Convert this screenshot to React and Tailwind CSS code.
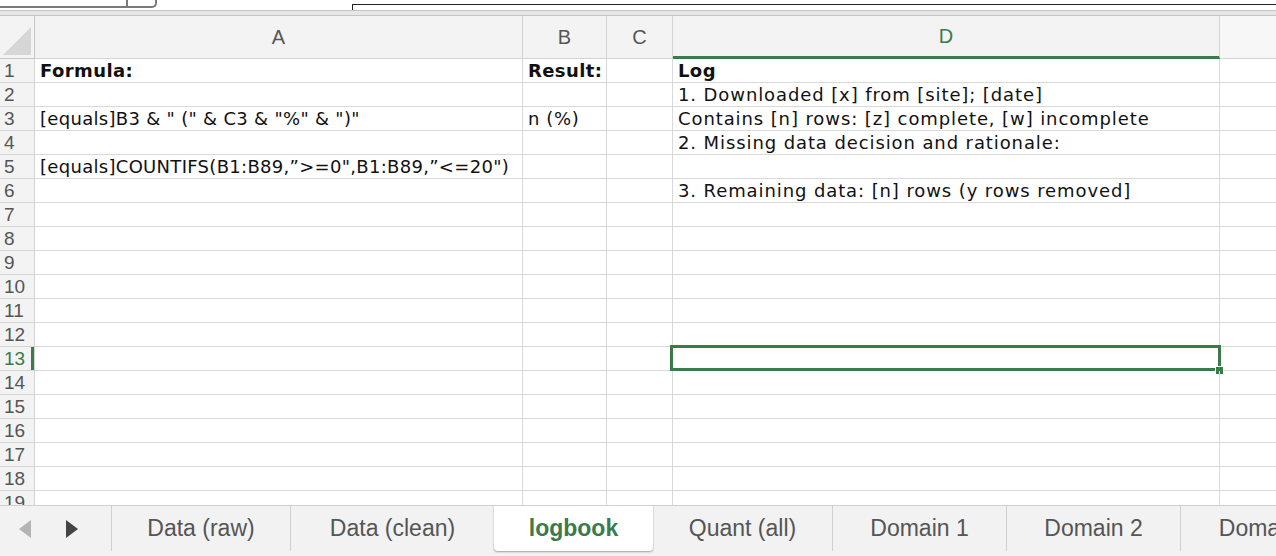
import React from "react";

const cellFont = { fontFamily: '"DejaVu Sans", "Noto Sans", sans-serif' };

const rows = [
  { a: "Formula:", b: "Result:", d: "Log", bold: true },
  { d: "1. Downloaded [x] from [site]; [date]" },
  { a: '[equals]B3 & " (" & C3 & "%" & ")"', b: "n (%)", d: "Contains [n] rows: [z] complete, [w] incomplete" },
  { d: "2. Missing data decision and rationale:" },
  { a: "[equals]COUNTIFS(B1:B89,”>=0\",B1:B89,”<=20\")" },
  { d: "3. Remaining data: [n] rows (y rows removed]" },
  {}, {}, {}, {}, {}, {}, {}, {}, {}, {}, {}, {}, {},
];

const tabs = ["Data (raw)", "Data (clean)", "logbook", "Quant (all)", "Domain 1", "Domain 2", "Domain 3"];
const tabWidths = ["w-[179px]", "w-[203px]", "w-[159px]", "w-[180px]", "w-[174px]", "w-[174px]", "w-[174px]"];

const colW = "grid grid-cols-[35px_488px_84px_66px_547px_1fr]";
const cellCls = "border-r border-b border-[#d9d9d9] pl-[5px] pt-[1px] text-[18px] leading-[22px] text-[#111] whitespace-nowrap overflow-visible ";

function Row({ n, r }) {
  const sel = n === 13;
  const txt = r.bold ? "font-bold tracking-[0.4px]" : "";
  return (
    <div className={colW + " h-[24px] shrink-0"}>
      <div
        className={
          "border-r border-b border-[#d4d4d4] bg-[#f3f3f3] pl-[4px] text-[19px] leading-[23px] " +
          (sel ? "text-[#3b7a4b] shadow-[inset_-3px_0_0_#3b7a4b]" : "text-[#555]")
        }
        style={{ fontFamily: '"Liberation Sans", Arial, sans-serif' }}
      >
        {n}
      </div>
      <div className={cellCls + (r.bold ? txt : "tracking-[0.3px]")} style={cellFont}>
        {r.a}
      </div>
      <div className={cellCls + (r.bold ? txt : "tracking-[0.6px]")} style={cellFont}>
        {r.b}
      </div>
      <div className="border-r border-b border-[#d9d9d9]" />
      <div className={"relative " + cellCls + (r.bold ? txt : "tracking-[0.9px]")} style={cellFont}>
        {r.d}
        {sel && (
          <>
            <div className="absolute -left-[3px] -top-[2px] -right-[2px] -bottom-[1px] border-[3px] border-[#3b7a4b]" />
            <div className="absolute -right-[5px] -bottom-[5px] h-[9px] w-[9px] bg-[#3b7a4b] border border-white" />
          </>
        )}
      </div>
      <div className="border-b border-[#d9d9d9]" />
    </div>
  );
}

export default function App() {
  return (
    <div className="flex h-[556px] w-[1276px] flex-col overflow-hidden bg-white">
      {/* toolbar remnant */}
      <div className="flex h-[10px] shrink-0 items-start bg-white">
        <div className="flex h-[8px] w-[157px] shrink-0 rounded-br-[5px] border-r-2 border-b-2 border-[#7a7a7a]">
          <div className="w-[128px] border-r-2 border-[#7a7a7a]" />
        </div>
        <div className="ml-[195px] mt-[4px] h-[6px] flex-1 border-t-[1.5px] border-l border-[#222]" />
      </div>
      <div className="h-[6px] shrink-0 border-t border-b border-[#c4c4c4] bg-[#e6e6e6]" />

      {/* column headers */}
      <div className={colW + " h-[43px] shrink-0 bg-[#f3f3f3]"} style={{ fontFamily: '"Liberation Sans", Arial, sans-serif' }}>
        <div className="relative border-r border-b border-[#c8c8c8]">
          <svg className="absolute right-[3px] bottom-[3px]" width="28" height="28" viewBox="0 0 28 28">
            <polygon points="28,0 28,28 0,28" fill="#d6d6d6" />
          </svg>
        </div>
        {["A", "B", "C"].map((c) => (
          <div key={c} className="flex items-center justify-center border-r border-b border-[#d4d4d4] text-[20px] text-[#555]">
            {c}
          </div>
        ))}
        <div className="flex items-center justify-center border-r border-[#d4d4d4] border-b-[3px] border-b-[#3b7a4b] text-[20px] text-[#3b7a4b]">
          D
        </div>
        <div className="border-b border-[#d4d4d4] bg-[#f7f7f7]" />
      </div>

      {/* grid */}
      <div className="flex flex-1 flex-col overflow-hidden">
        {rows.map((r, i) => (
          <Row key={i} n={i + 1} r={r} />
        ))}
      </div>

      {/* sheet tabs */}
      <div
        className="flex h-[51px] shrink-0 items-start overflow-hidden border-t border-[#d0d0d0] bg-[#f2f2f2] text-[23px] text-[#555]"
        style={{ fontFamily: '"Liberation Sans", Arial, sans-serif' }}
      >
        <div className="flex h-[45px] w-[112px] shrink-0 items-center border-r border-[#d0d0d0]">
          <svg className="ml-[19px]" width="12" height="18" viewBox="0 0 12 18">
            <polygon points="12,0 12,18 0,9" fill="#b4b4b4" />
          </svg>
          <svg className="ml-[35px]" width="12" height="18" viewBox="0 0 12 18">
            <polygon points="0,0 0,18 12,9" fill="#444" />
          </svg>
        </div>
        {tabs.map((t, i) =>
          t === "logbook" ? (
            <div
              key={t}
              className={tabWidths[i] + " -mt-px flex h-[46px] shrink-0 items-center justify-center rounded-b-[4px] bg-white font-bold text-[#3b7a4b] shadow-[0_1px_2px_rgba(0,0,0,0.35)]"}
            >
              {t}
            </div>
          ) : (
            <div
              key={t}
              className={tabWidths[i] + " flex h-[45px] shrink-0 items-center justify-center whitespace-nowrap " + (tabs[i + 1] === "logbook" || i === tabs.length - 1 ? "" : "border-r border-[#d0d0d0]")}
            >
              {t}
            </div>
          )
        )}
      </div>
    </div>
  );
}
